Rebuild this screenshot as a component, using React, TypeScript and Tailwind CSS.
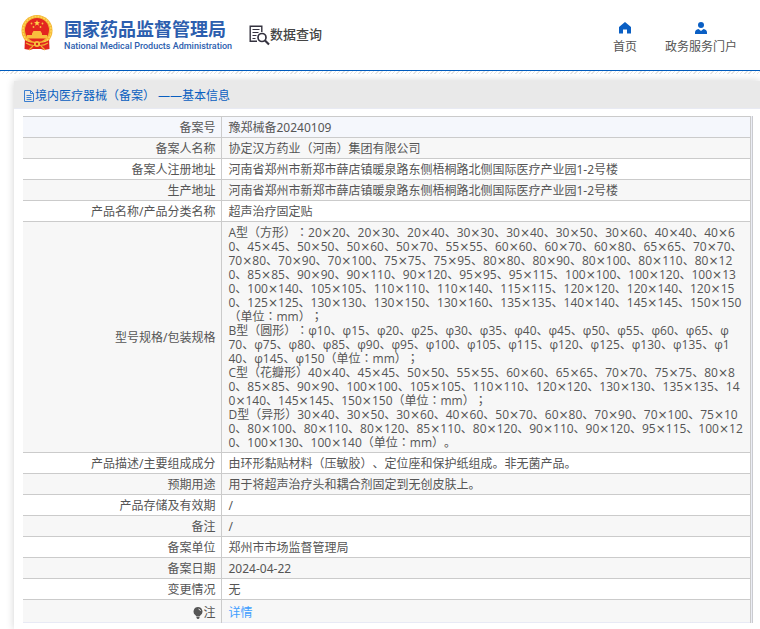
import { Fragment } from 'react';
import type { ReactNode } from 'react';

const specLines: string[] = [
  'A型（方形）：20×20、20×30、20×40、30×30、30×40、30×50、30×60、40×40、40×6',
  '0、45×45、50×50、50×60、50×70、55×55、60×60、60×70、60×80、65×65、70×70、',
  '70×80、70×90、70×100、75×75、75×95、80×80、80×90、80×100、80×110、80×12',
  '0、85×85、90×90、90×110、90×120、95×95、95×115、100×100、100×120、100×13',
  '0、100×140、105×105、110×110、110×140、115×115、120×120、120×140、120×15',
  '0、125×125、130×130、130×150、130×160、135×135、140×140、145×145、150×150',
  '（单位：mm）；',
  'B型（圆形）：φ10、φ15、φ20、φ25、φ30、φ35、φ40、φ45、φ50、φ55、φ60、φ65、φ',
  '70、φ75、φ80、φ85、φ90、φ95、φ100、φ105、φ115、φ120、φ125、φ130、φ135、φ1',
  '40、φ145、φ150（单位：mm）；',
  'C型（花瓣形）40×40、45×45、50×50、55×55、60×60、65×65、70×70、75×75、80×8',
  '0、85×85、90×90、100×100、105×105、110×110、120×120、130×130、135×135、14',
  '0×140、145×145、150×150（单位：mm）；',
  'D型（异形）30×40、30×50、30×60、40×60、50×70、60×80、70×90、70×100、75×10',
  '0、80×100、80×110、80×120、85×110、80×120、90×110、90×120、95×115、100×12',
  '0、100×130、100×140（单位：mm）。',
];

function SpecLine({ text }: { text: string }) {
  return (
    <span className="block whitespace-nowrap">
      {text.split('×').map((part, i) => (
        <Fragment key={i}>
          {i > 0 && <span className="font-['DejaVu_Sans',sans-serif] leading-none">×</span>}
          {part}
        </Fragment>
      ))}
    </span>
  );
}

const rows: { label: string; value: ReactNode }[] = [
  { label: '备案号', value: '豫郑械备20240109' },
  { label: '备案人名称', value: '协定汉方药业（河南）集团有限公司' },
  { label: '备案人注册地址', value: '河南省郑州市新郑市薛店镇暖泉路东侧梧桐路北侧国际医疗产业园1-2号楼' },
  { label: '生产地址', value: '河南省郑州市新郑市薛店镇暖泉路东侧梧桐路北侧国际医疗产业园1-2号楼' },
  { label: '产品名称/产品分类名称', value: '超声治疗固定贴' },
  {
    label: '型号规格/包装规格',
    value: (
      <div className="font-['Open_Sans','Noto_Sans_CJK_JP',sans-serif]">
        {specLines.map((line) => (
          <SpecLine key={line} text={line} />
        ))}
      </div>
    ),
  },
  { label: '产品描述/主要组成成分', value: '由环形黏贴材料（压敏胶）、定位座和保护纸组成。非无菌产品。' },
  { label: '预期用途', value: '用于将超声治疗头和耦合剂固定到无创皮肤上。' },
  { label: '产品存储及有效期', value: '/' },
  { label: '备注', value: '/' },
  { label: '备案单位', value: '郑州市市场监督管理局' },
  { label: '备案日期', value: '2024-04-22' },
  { label: '变更情况', value: '无' },
];

function Emblem() {
  return (
    <svg viewBox="0 0 32 36" className="h-9 w-8 shrink-0" aria-hidden="true">
      <path d="M4 23 3.500 34 9 35l3-1h8l3 1 5.500-1L28 23Z" fill="#dd221d" />
      <circle cx="16" cy="15.500" r="15.500" fill="#f3b431" />
      <circle cx="16" cy="15.500" r="14" fill="none" stroke="#ffd65a" strokeWidth="1.500" strokeDasharray="2 1" />
      <circle cx="16" cy="15" r="12" fill="#e32620" />
      <path d="m16 5 .8 2.100 2.200.1-1.700 1.400.6 2.200L16 9.600l-1.900 1.200.6-2.200L13 7.200l2.200-.1Z" fill="#ffd34a" />
      <g fill="#f9be3d">
        <circle cx="10.500" cy="8.500" r=".9" />
        <circle cx="21.500" cy="8.500" r=".9" />
        <circle cx="12.500" cy="12" r=".9" />
        <circle cx="19.500" cy="12" r=".9" />
        <path d="M11 18.500 12.500 16h7l1.500 2.500v1.500h5v3.500H6V20h5Z" />
      </g>
      <path d="M4 25.500q5 2 9 2.500v6H4.500ZM28 25.500q-5 2-9 2.500v6h8.500Z" fill="#e0241e" />
      <circle cx="16" cy="29" r="3" fill="#f6bf3e" />
      <circle cx="16" cy="29" r="1.200" fill="#d8201c" />
      <path d="M5 28q4 2.500 8 2.500M27 28q-4 2.500-8 2.500M8 35l4-4M24 35l-4-4" stroke="#f2b033" strokeWidth="1.200" fill="none" />
    </svg>
  );
}

function SearchDocIcon() {
  return (
    <svg viewBox="0 0 21 21" className="size-[21px] shrink-0" fill="none" stroke="#34323f" aria-hidden="true">
      <path d="M8 16.300H1.200V1.200h11.600V7" strokeWidth="1.400" />
      <path d="M3.500 4.500h7M3.500 7.500h6M3.500 10.500h4M3.500 13.500h3" strokeWidth="1" />
      <circle cx="13" cy="12.500" r="4" strokeWidth="1.700" />
      <path d="m16 15.500 4 4" strokeWidth="2.200" />
    </svg>
  );
}

function HomeIcon() {
  return (
    <svg viewBox="0 0 12 12" className="size-3" fill="#0a5fc4" aria-hidden="true">
      <path d="M6 0 0 5V11.500h4V7.500h4v4h4V5Z" />
    </svg>
  );
}

function UserIcon() {
  return (
    <svg viewBox="0 0 12 12" className="size-3" fill="#0a5fc4" aria-hidden="true">
      <circle cx="6" cy="3" r="3" />
      <path d="M0 12V10.500Q0 7.500 3.500 7L6 9l2.500-2Q12 7.500 12 10.500V12Z" />
    </svg>
  );
}

function FileIcon() {
  return (
    <svg viewBox="0 0 12 12" className="size-3 shrink-0" fill="none" stroke="#3b7fd0" aria-hidden="true">
      <path d="M1.500.5h6l3 3v8h-9ZM7.500.5v3h3M3.500 5.500h5M3.500 7.500h5M3.500 9.500h5" />
    </svg>
  );
}

function BulbIcon() {
  return (
    <svg viewBox="0 0 10 12" className="h-3 w-2.5" aria-hidden="true">
      <path d="M5 0a4.500 4.500 0 0 0-2.500 8.200L3.500 9.500h3l1-1.300A4.500 4.500 0 0 0 5 0ZM3.500 10h3v1l-1 1h-1l-1-1Z" fill="#555" />
      <path d="M5.500 2q1.800.3 2 2" stroke="#fff" strokeWidth=".8" fill="none" />
    </svg>
  );
}

export default function App() {
  return (
    <div className="min-h-screen overflow-hidden bg-white font-['Noto_Sans','Noto_Sans_CJK_SC',sans-serif] text-xs leading-[14px] text-[#555] [text-spacing-trim:space-all]">
      <header className="flex h-[71px] items-start justify-between border-b border-[#005bbd] pr-[23px] pl-[21px]">
        <div className="flex items-start">
          <a href="#home" className="flex gap-[11px] pt-[15px] text-[#2c5eae]">
            <Emblem />
            <span className="flex flex-col pt-1">
              <span className="text-lg leading-5 font-bold">国家药品监督管理局</span>
              <span className="font-['Roboto',sans-serif] text-[9px] leading-[14px] font-medium">
                National Medical Products Administration
              </span>
            </span>
          </a>
          <a href="#query" className="ml-[17px] flex pt-[25px] text-[13px] leading-[18px] font-medium text-[#444]">
            <SearchDocIcon />
            数据查询
          </a>
        </div>
        <nav className="flex gap-7 pt-[22px]">
          <a href="#home" className="flex flex-col items-center gap-1.5">
            <HomeIcon />
            首页
          </a>
          <a href="#portal" className="flex flex-col items-center gap-1.5">
            <UserIcon />
            政务服务门户
          </a>
        </nav>
      </header>
      <div className="h-[3px] bg-[repeating-linear-gradient(135deg,#e4e4e4_0_1px,#fff_1px_3px)]" />
      <main className="mt-[7px] ml-3.5 min-h-[548px] bg-white shadow-[0_0_8px_rgba(0,0,0,0.18)]">
        <h1 className="flex h-7 items-center border-b border-[#e8eaf3] bg-[#e9e9e9] pt-0.5 pl-[9px] text-[#0a5fc0]">
          <FileIcon />
          境内医疗器械（备案） ——基本信息
        </h1>
        <div className="mt-[7px] mr-[7px] ml-[9px] border-r border-[#cacbd0] bg-[#ebedf5] pr-px">
          <table className="w-full border-collapse border-b border-[#e8eaf5]">
            <tbody>
              {rows.map((row) => (
                <tr key={row.label} className="bg-white first:bg-[#f5f7fc] even:bg-[#f7f7f7]">
                  <th scope="row" className="w-[198px] border-y border-r border-[#cbcbcb] pt-1 pr-[5px] pb-0.5 text-right font-normal">
                    {row.label}
                  </th>
                  <td className="border border-[#cbcbcb] px-[7px] pt-1 pb-0.5">{row.value}</td>
                </tr>
              ))}
              <tr className="bg-[#f7f7f7]">
                <th scope="row" className="border-r border-[#cbcbcb] pt-1.5 pr-[5px] pb-0.5 font-normal">
                  <span className="flex items-center justify-end">
                    <BulbIcon />注
                  </span>
                </th>
                <td className="border-x border-[#cbcbcb] px-[7px] pt-1.5 pb-0.5">
                  <a href="#detail" className="text-[#409eff]">
                    详情
                  </a>
                </td>
              </tr>
            </tbody>
          </table>
        </div>
      </main>
    </div>
  );
}
